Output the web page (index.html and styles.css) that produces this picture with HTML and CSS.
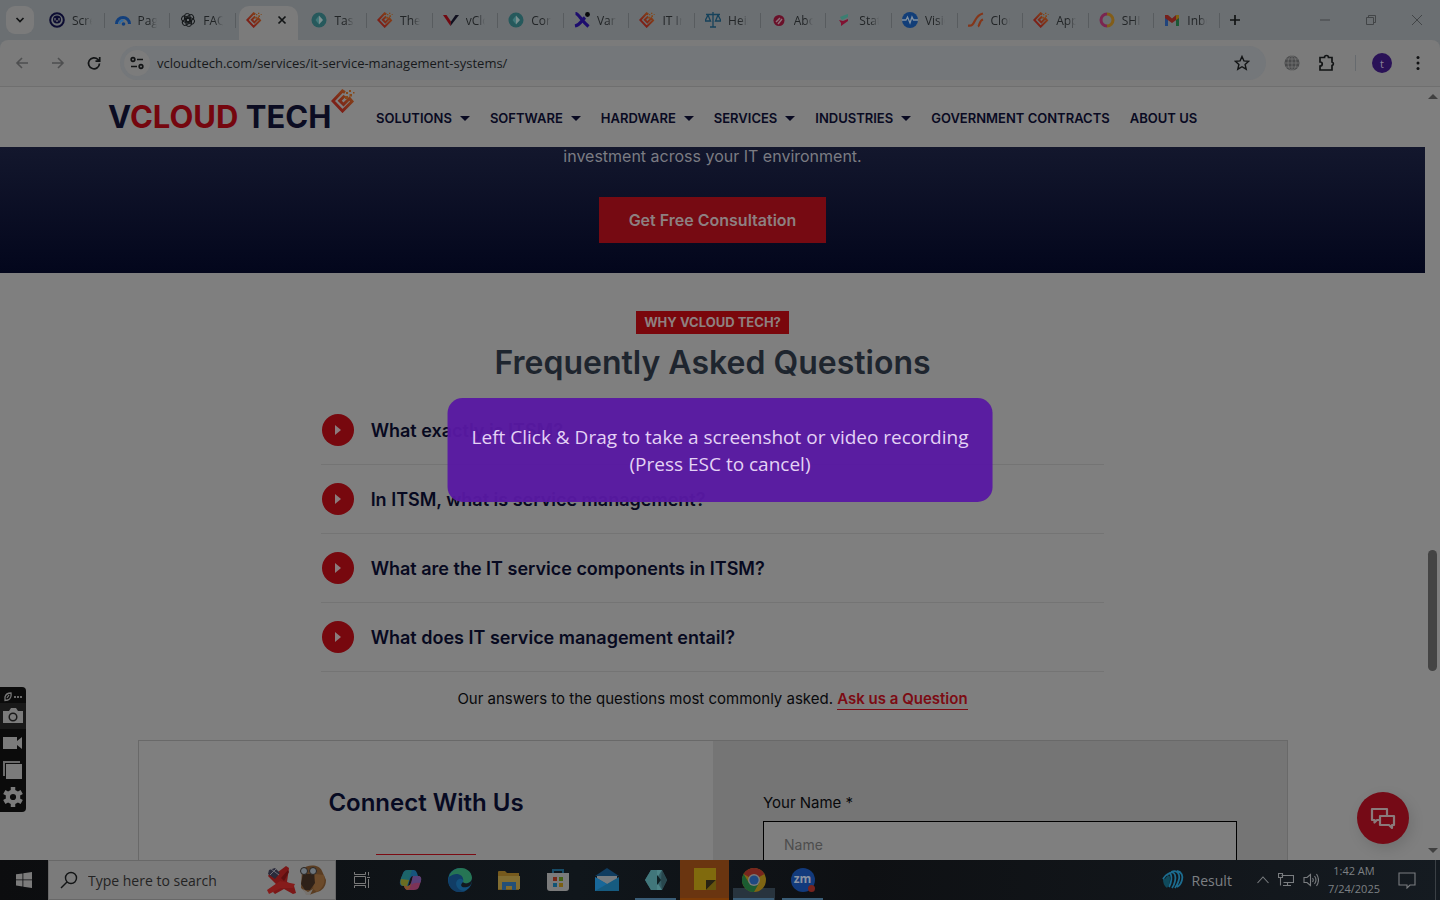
FILE: index.html
```html
<!DOCTYPE html>
<html lang="en">
<head>
<meta charset="utf-8">
<title>IT Service Management Systems - vCloud Tech</title>
<link rel="stylesheet" href="styles.css">
</head>
<body>
<svg class="defs" width="0" height="0" aria-hidden="true">
  <defs>
    <linearGradient id="ember" x1="0" y1="1" x2="1" y2="0"><stop offset="0" stop-color="#7a1416"/><stop offset="1" stop-color="#85481a"/></linearGradient>
    <symbol id="vcloud" viewBox="0 0 24 24">
      <path d="M14 3.500 11.500 2 2 12l9.500 10L21 12.500l-2.500-3-6 6-3.800-3.800 5-5" fill="none" stroke="url(#ember)" stroke-width="3"/>
      <path d="M15 3h2v2h-2zM18 1h2v2h-2zM18.500 5h2.500v2.500h-2.500zM22 3h1.500v1.500H22zM14 7h3v3h-3z" fill="#85481a"/>
    </symbol>
    <symbol id="hexa" viewBox="0 0 16 16"><circle cx="8" cy="8" r="7.500" fill="#26595c"/><path d="M8 3.500 12 8l-4 4.500z" fill="#7b8e8e"/><path d="M8 3.500 4.500 8 8 12.500z" fill="#407779"/></symbol>
  </defs>
</svg>

<div class="screen">
  <header class="browser">
    <div class="tabstrip">
      <button class="tab-search" aria-label="Search tabs"><svg width="10" height="10" viewBox="0 0 10 10"><path d="m1.500 3 3.500 3.500L8.500 3" class="ln2"/></svg></button>
      <div class="tabs" role="tablist">
        <button class="tab" role="tab"><svg viewBox="0 0 16 16"><circle cx="8" cy="8" r="6.800" fill="none" stroke="#0c0c32" stroke-width="2"/><circle cx="8" cy="7.500" r="4" fill="#0c0c32"/><path d="M6 6v2.500M8 8v2M10 6v2.500" stroke="#777" stroke-width="1.200"/></svg><span>Screen</span></button>
        <button class="tab" role="tab"><svg viewBox="0 0 16 16"><path d="M1.500 12a6.500 6.500 0 0 1 13 0" fill="none" stroke="#123f7c" stroke-width="3"/><path d="M4.500 12a3.500 3.500 0 0 1 4-3.500" fill="none" stroke="#2e6ba5" stroke-width="2"/><circle cx="8.500" cy="12" r="1.800" fill="#123f7c"/></svg><span>Page</span></button>
        <button class="tab" role="tab"><svg viewBox="0 0 16 16" fill="none" stroke="#15181a"><g id="k"><rect x="4.500" y="1.500" width="5.500" height="8.500" rx="2.700"/></g><use href="#k" transform="rotate(60 8 8)"/><use href="#k" transform="rotate(120 8 8)"/><use href="#k" transform="rotate(180 8 8)"/><use href="#k" transform="rotate(240 8 8)"/><use href="#k" transform="rotate(300 8 8)"/></svg><span>FAQ</span></button>
        <button class="tab active" role="tab" aria-selected="true" aria-label="IT Service Management Systems"><svg><use href="#vcloud"/></svg><svg class="close" viewBox="0 0 10 10"><path d="m1.500 1.500 7 7m0-7-7 7" class="ln2"/></svg></button>
        <button class="tab" role="tab"><svg><use href="#hexa"/></svg><span>Tasks</span></button>
        <button class="tab" role="tab"><svg><use href="#vcloud"/></svg><span>The</span></button>
        <button class="tab" role="tab"><svg viewBox="0 0 16 16"><path d="M0 3h3.500L8 9.500 7.500 14z" fill="#720911"/><path d="M12.500 3H16L7.500 14 8 9.500z" fill="#10101f"/></svg><span>vCloud</span></button>
        <button class="tab" role="tab"><svg><use href="#hexa"/></svg><span>Cont</span></button>
        <button class="tab" role="tab"><svg viewBox="0 0 16 16"><path d="M1.500 1.500c3 0 5 6 13 13M1 14c5-1 6-5 10-8.500" fill="none" stroke="#1d0d6e" stroke-width="3.200"/><circle cx="13.500" cy="2.500" r="2.400" fill="#07070b"/></svg><span>Vanta</span></button>
        <button class="tab" role="tab"><svg><use href="#vcloud"/></svg><span>IT In</span></button>
        <button class="tab" role="tab"><svg viewBox="0 0 16 16"><path d="M8 0v15M1 2.500h14M5 15h6M3 3 0 9h5.500L3 3m10 0-2.500 6H16l-3-6" fill="none" stroke="#16425b" stroke-width="1.300"/></svg><span>Heim</span></button>
        <button class="tab" role="tab"><svg viewBox="0 0 16 16"><circle cx="8" cy="8.500" r="5.500" fill="#6a1029"/><path d="m5 10 4-4m-2 6 4-5" stroke="#8c7079" stroke-width="1.500"/></svg><span>Abou</span></button>
        <button class="tab" role="tab"><svg viewBox="0 0 16 16"><path d="m4 5 5-2 3-1v3L6 8z" fill="#3b7f72"/><path d="m3 8 4 1 5-2v2L5 14v-3z" fill="#801131"/></svg><span>Stat</span></button>
        <button class="tab" role="tab"><svg viewBox="0 0 16 16"><circle cx="8" cy="8" r="8" fill="#123e78"/><path d="M0 8h4l1.500-3L8 11l2-6 1.500 3H16" fill="none" stroke="#8291a0" stroke-width="1.300"/></svg><span>Visio</span></button>
        <button class="tab" role="tab"><svg viewBox="0 0 16 16"><path d="M0 13.500c8 2 5-10 15-12M10 14.500c2-1 1-6 5-7" fill="none" stroke="#843619" stroke-width="2.200"/></svg><span>Clou</span></button>
        <button class="tab" role="tab"><svg><use href="#vcloud"/></svg><span>App</span></button>
        <button class="tab" role="tab"><svg viewBox="0 0 16 16" fill="none" stroke-width="3"><path d="M8 14A6 6 0 0 1 8 2" stroke="#7b2550"/><path d="M8 2a6 6 0 0 1 0 12" stroke="#825d18"/></svg><span>SHI</span></button>
        <button class="tab" role="tab"><svg viewBox="0 0 16 16"><path d="M1 3h3v11H1z" fill="#21447c"/><path d="M12 3h3v11h-3z" fill="#1b5935"/><path d="M1 3h3l4 3.500L12 3h3v3l-7 5-7-5z" fill="#76201b"/><path d="M12 3h3v3l-3 2z" fill="#7f6110"/></svg><span>Inbox</span></button>
      </div>
      <button class="newtab" aria-label="New tab"><svg width="12" height="12" viewBox="0 0 12 12"><path d="M6 1v10M1 6h10" class="ln2"/></svg></button>
      <div class="window-controls">
        <button aria-label="Minimize"><svg width="12" height="12" viewBox="0 0 12 12"><path d="M1 6h10" class="thin"/></svg></button>
        <button aria-label="Restore"><svg width="12" height="12" viewBox="0 0 12 12"><path d="M1.500 3.500h7v7h-7zM3.500 3.500v-2h7v7h-2" class="thin"/></svg></button>
        <button aria-label="Close"><svg width="12" height="12" viewBox="0 0 12 12"><path d="m1 1 10 10M11 1 1 11" class="thin"/></svg></button>
      </div>
    </div>
    <div class="toolbar">
      <div class="nav-buttons">
        <button aria-label="Back"><svg width="16" height="16" viewBox="0 0 16 16"><path d="M14 8H3m5-5L3 8l5 5" class="dim"/></svg></button>
        <button aria-label="Forward"><svg width="16" height="16" viewBox="0 0 16 16"><path d="M2 8h11M8 3l5 5-5 5" class="dim"/></svg></button>
        <button aria-label="Reload"><svg width="16" height="16" viewBox="0 0 16 16"><path d="M13.500 8.500A5.500 5.500 0 1 1 12 4.500l1.500 1.500M13.700 2v4.200H9.500" class="ln2"/></svg></button>
      </div>
      <div class="omnibox">
        <button class="site-info" aria-label="Site information"><svg width="16" height="16" viewBox="0 0 16 16"><path d="M8 4.500h6M2 11.500h6" class="ln2"/><circle cx="4" cy="4.500" r="1.800" class="ln2"/><circle cx="12" cy="11.500" r="1.800" class="ln2"/></svg></button>
        <input class="url" type="text" aria-label="Address" value="vcloudtech.com/services/it-service-management-systems/">
        <button aria-label="Bookmark"><svg width="16" height="16" viewBox="0 0 16 16"><path d="m8 1.500 1.900 4.400 4.800.4-3.600 3.200 1.100 4.700L8 11.700l-4.200 2.500 1.100-4.700L1.300 6.300l4.800-.4z" class="ln15"/></svg></button>
      </div>
      <div class="extensions">
        <button aria-label="Translate extension"><svg width="16" height="16" viewBox="0 0 16 16"><circle cx="8" cy="8" r="7.500" fill="#494a4b"/><path d="M8 0v16M1 8h14M2 4h12M2 12h12" stroke="#737373" stroke-width=".8"/><ellipse cx="8" cy="8" rx="4" ry="7.500" fill="none" stroke="#737373" stroke-width=".8"/></svg></button>
        <button aria-label="Extensions"><svg width="18" height="18" viewBox="0 0 18 18"><path d="M2 3.500h4.500a2 2 0 0 1 4 0H14v4.500a1.800 1.800 0 0 1 0 3.500V16H2v-4c3 0 3-4 0-4z" class="ln2"/></svg></button>
        <span class="divider"></span>
        <button class="avatar" aria-label="Profile">t</button>
        <button aria-label="Menu"><svg width="16" height="16" viewBox="0 0 16 16" fill="#101112"><circle cx="8" cy="2.500" r="1.500"/><circle cx="8" cy="8" r="1.500"/><circle cx="8" cy="13.500" r="1.500"/></svg></button>
      </div>
    </div>
  </header>

  <div class="viewport">
    <div class="page">
      <div class="site-header">
        <a class="logo" href="#" aria-label="vCloud Tech home"><span>V<b>CLOUD</b> TECH</span><svg width="24" height="24"><use href="#vcloud"/></svg></a>
        <nav class="menu">
          <a class="has-sub" href="#">SOLUTIONS</a>
          <a class="has-sub" href="#">SOFTWARE</a>
          <a class="has-sub" href="#">HARDWARE</a>
          <a class="has-sub" href="#">SERVICES</a>
          <a class="has-sub" href="#">INDUSTRIES</a>
          <a href="#">GOVERNMENT CONTRACTS</a>
          <a href="#">ABOUT US</a>
        </nav>
      </div>
      <section class="hero">
        <p>investment across your IT environment.</p>
        <a class="cta" href="#">Get Free Consultation</a>
      </section>
      <section class="faq">
        <span class="badge">WHY VCLOUD TECH?</span>
        <h2>Frequently Asked Questions</h2>
        <div class="questions">
          <button><i></i>What exactly is ITSM?</button>
          <button><i></i>In ITSM, what is service management?</button>
          <button><i></i>What are the IT service components in ITSM?</button>
          <button><i></i>What does IT service management entail?</button>
        </div>
        <p class="more">Our answers to the questions most commonly asked. <a href="#">Ask us a Question</a></p>
      </section>
      <section class="contact">
        <div class="connect"><h3>Connect With Us</h3><hr></div>
        <form class="form"><label for="name">Your Name *</label><input id="name" type="text" placeholder="Name"></form>
      </section>
      <button class="chat" aria-label="Chat"><svg width="26" height="26" viewBox="0 0 26 26" fill="none" stroke="#8a7a7b" stroke-width="2.200" stroke-linejoin="round"><path d="M9 15H7l-2.500 2.500V15H2V4h15v6"/><path d="M10 11h14v9h-2v3l-3-3h-9z"/></svg></button>
    </div>
    <div class="scrollbar"><span class="up"></span><span class="thumb"></span><span class="down"></span></div>
  </div>

  <footer class="taskbar">
    <button class="start" aria-label="Start"><svg width="16" height="16" viewBox="0 0 16 16" fill="#7b7b7b"><path d="M0 2.300 6.500 1.400v6.100H0zM7.300 1.300 16 0v7.500H7.300zM0 8.300h6.500v6.200L0 13.600zM7.300 8.300H16V16l-8.700-1.300z"/></svg></button>
    <label class="search"><svg width="18" height="18" viewBox="0 0 18 18"><circle cx="11" cy="7" r="5.500" class="ln15"/><path d="m7 11-6 6" class="ln15"/></svg><input type="text" aria-label="Search Windows" placeholder="Type here to search">
      <svg width="62" height="32" viewBox="0 0 62 32"><path d="m13 8 8-6 3 2-2 14 7 4 2 7-3 1-9-5-9 5-2-2 4-7-9-9 2-3z" fill="#7b1717"/><path d="m4 6 6-2 5 5-5 6-7-5z" fill="#2b2b3b"/><path d="m6 5 8 6m-9 0 6-6" stroke="#6f6f78"/><path d="m2 26 13-9 15 3-2 4-12 0-12 6z" fill="#861c1b"/><path d="m16 14 7-8 1 2-5 9z" fill="#5c0f10"/><path d="M37 6c5-6 17-6 20 1l4 9c0 7-4 11-9 12l-8 3-8-7z" fill="#5a3d22"/><path d="m50 10 9 1c2 7-1 13-7 17l-4-3z" fill="#6b4a2a"/><path d="M38 10h11l1 9-5 7h-5l-4-6z" fill="#2e2118"/><circle cx="39" cy="7" r="3.500" fill="#6d757c" stroke="#292522"/><circle cx="48" cy="7" r="3.500" fill="#6d757c" stroke="#292522"/><path d="m38 25 5 3 5-3-3 6h-4z" fill="#78736e"/></svg>
    </label>
    <div class="apps">
      <button aria-label="Task view"><svg width="16" height="16" viewBox="0 0 16 16" fill="none" stroke="#7a7a7a"><path d="M.5 0v2.500h11V0M.5 16v-2.500h11V16M.5 4.500h11v7H.5zM14.500 0v3.500M14.500 7v9M13 5.500h3"/></svg></button>
      <button aria-label="Copilot"><svg width="24" height="24" viewBox="0 0 24 24"><path d="M9 2h6q2 0 3 3l1 3h-5q-2 0-3 3l-2 7H4q-4 0-3-5l3-8q1-3 5-3z" fill="#16557d"/><path d="M2 10 5 4q1-2 4-2h4l-3 10-2 6H5q-5 0-3-8z" fill="#1c6469"/><path d="M2 11l8 1-2 6H5q-5 0-3-7z" fill="#6a6d22"/><path d="M15 22H9q-3 0-4-4h4q2 0 3-3l2-7h5q4 0 3 5l-2 6q-1 3-5 3z" fill="#7d3357"/><path d="m14 8 5 0q4 0 3 5l-1 2q-6-1-9 2z" fill="#594077"/><path d="M5 18h4q2 0 3-3l-1 5-2 2q-3 0-4-4z" fill="#81512c"/></svg></button>
      <button aria-label="Edge"><svg width="24" height="24" viewBox="0 0 24 24"><circle cx="12" cy="12" r="12" fill="#12507d"/><path d="M1 9C4-3 23-3 24 10c0 5-7 7-9 4 2-5-5-8-14-5z" fill="#267554"/><path d="M1 9c7-6 15-2 14 3-4-4-9 2-6 7 2 3 6 5 10 3C9 28-2 20 1 9z" fill="#113d66"/><path d="M15 14c2 3 9 1 9-4 1 5-2 9-5 9-5 1-8-1-4-5z" fill="#13191e"/></svg></button>
      <button aria-label="File Explorer"><svg width="24" height="24" viewBox="0 0 24 24"><path d="M1 4q0-1 1-1h6l2 2h12v17H1z" fill="#765a1d"/><path d="M1 8h22v13H1z" fill="#816d32"/><path d="M5 14h14v8h-4v-4H9v4H5z" fill="#234f78"/></svg></button>
      <button aria-label="Microsoft Store"><svg width="24" height="24" viewBox="0 0 24 24"><path d="M7 6V2h10v4" fill="none" stroke="#174b66" stroke-width="2"/><path d="M1 5h22v15q0 3-3 3H4q-3 0-3-3z" fill="#7b7b7b"/><path d="M7 9h4v4H7z" fill="#772716"/><path d="M13 9h4v4h-4z" fill="#456214"/><path d="M7 15h4v4H7z" fill="#125475"/><path d="M13 15h4v4h-4z" fill="#7b5e12"/></svg></button>
      <button aria-label="Mail"><svg width="24" height="24" viewBox="0 0 24 24"><path d="M0 8 12 0l12 8z" fill="#103d60"/><path d="M2 8h20v8H2z" fill="#767c80"/><path d="M0 9 12 16 24 9v14H0z" fill="#165b80"/><path d="M0 9 12 16 0 23z" fill="#18689a"/></svg></button>
      <button class="open" aria-label="Screen recorder"><svg width="24" height="24" viewBox="0 0 24 24"><path d="M7 2h11l5 10-5 10H7L1 12z" fill="#345d64"/><path d="M1 12 7 2h6v20H7z" fill="#41777b"/><path d="M13 2h5l-5 8zM13 22h5l-5-8z" fill="#4d8588"/><path d="m13 7 4 5-4 5z" fill="#0f1f22"/><path d="m17 12 1-10 5 10-5 10z" fill="#29484e"/></svg></button>
      <button class="sticky" aria-label="Sticky Notes"><svg width="24" height="24" viewBox="0 0 24 24"><path d="M1 1h22v12L13 23H1z" fill="#806a0d"/><path d="M13 13h10L13 23z" fill="#272313"/><path d="M13 23 23 13v10z" fill="#66540d"/></svg></button>
      <button class="open current" aria-label="Chrome"><svg width="24" height="24" viewBox="0 0 24 24"><circle cx="12" cy="12" r="12" fill="#7e6513"/><path d="M12 12 1.600 6A12 12 0 0 1 22.400 6z" fill="#77251e"/><path d="M1.600 6A12 12 0 0 0 12 24l5-9H7z" fill="#1b5c31"/><circle cx="12" cy="12" r="6" fill="#7a7a7a"/><circle cx="12" cy="12" r="4.600" fill="#1f4982"/></svg></button>
      <button class="open zoom" aria-label="Zoom"><span>zm</span></button>
    </div>
    <div class="tray">
      <button class="news"><svg width="22" height="22" viewBox="0 0 22 22"><path d="M3 10c4-5 5-4 5 0s-1 6-3 9c-3-2-4-5-4-9z" fill="#0f4a5c"/><path d="M1 10C4 5 8 3 9 6s0 8-2 12M5 6c4-4 7-3 8 0s0 9-3 13M9 3c5-2 7 0 8 3s-1 9-4 13M15 2c5 1 6 5 5 9s-3 6-5 7" fill="none" stroke="#1c6c8f" stroke-width="1.800"/></svg>Result</button>
      <button aria-label="Hidden icons"><svg width="12" height="12" viewBox="0 0 12 12"><path d="m.5 9 5.500-6 5.500 6" class="tray-ln"/></svg></button>
      <button aria-label="Network"><svg width="16" height="16" viewBox="0 0 16 16"><path d="M3.500 3.500h12v7h-10M9.500 10.500v3M5 13.500h8M.5 1.500h4v4h-4zM2.500 5.500v8" class="tray-ln"/></svg></button>
      <button aria-label="Volume"><svg width="16" height="16" viewBox="0 0 16 16"><path d="M1 5.500h3l3.500-3v11l-3.500-3H1zM9.500 6q1.500 2 0 4M11.500 4q3 4 0 8M13.500 2q4 6 0 12" class="tray-ln"/></svg></button>
      <div class="clock"><span>1:42 AM</span><span>7/24/2025</span></div>
      <button class="notes" aria-label="Notifications"><svg width="18" height="18" viewBox="0 0 18 18"><path d="M1 2h16v12h-5l-3 3v-3H1z" class="tray-ln"/></svg></button>
      <span class="peek"></span>
    </div>
  </footer>

  <aside class="recorder">
    <div class="grip"><svg width="20" height="10" viewBox="0 0 20 10"><path d="M2 8.500 2 5q1-4 6-4 1 5-3 7zM4 6l2-3" fill="none" stroke="#777" stroke-width="1.300"/><path d="M11 5h2m1 0h2m1 0h2" stroke="#888" stroke-width="1.500"/></svg></div>
    <button class="selected" aria-label="Photo"><svg width="20" height="18" viewBox="0 0 20 18"><path d="M0 4h6l2-3h5l2 3h5v12H0z" fill="#7b7b7b"/><circle cx="10" cy="10" r="3.800" fill="none" stroke="#191919" stroke-width="1.500"/></svg></button>
    <button aria-label="Video"><svg width="20" height="18" viewBox="0 0 20 18"><path d="M0 3h14v4l5-4v12l-5-4v4H0z" fill="#7b7b7b"/></svg></button>
    <button aria-label="Gallery"><svg width="20" height="18" viewBox="0 0 20 18"><path d="M0 0h17v2H2v13H0z" fill="#6a6a6a"/><path d="M3 3h16v15H3z" fill="#7b7b7b"/></svg></button>
    <button aria-label="Settings"><svg width="20" height="20" viewBox="0 0 20 20"><circle cx="10" cy="10" r="5.200" fill="none" stroke="#7b7b7b" stroke-width="4.200"/><path d="M10 0v4M10 16v4M1.300 5l3.500 2M15.200 13l3.500 2M1.300 15l3.500-2M15.200 7l3.500-2" stroke="#7b7b7b" stroke-width="4.500"/></svg></button>
  </aside>
  <div class="hint" role="status">Left Click &amp; Drag to take a screenshot or video recording<br>(Press ESC to cancel)</div>
</div>
</body>
</html>
```
FILE: styles.css
```css
* { box-sizing: border-box; }
body { margin: 0; background: #7f7f7f; font-family: Inter, "Liberation Sans", sans-serif; color: #08090c; }
button { font: inherit; color: inherit; background: none; border: 0; padding: 0; display: flex; align-items: center; justify-content: center; }
input { font: inherit; color: inherit; background: none; border: 0; padding: 0; min-width: 0; outline: 0; }
a { color: inherit; text-decoration: none; }
h2, h3, p { margin: 0; }
svg { flex: none; display: block; }
.defs { position: absolute; }
.ln2 { fill: none; stroke: #121415; stroke-width: 1.7; }
.ln15 { fill: none; stroke: #121415; stroke-width: 1.4; }
.thin { fill: none; stroke: #424547; stroke-width: 1; }
.dim { fill: none; stroke: #4e4f50; stroke-width: 1.6; }
.tray-ln { fill: none; stroke: #7a7d80; stroke-width: 1.1; }

.screen { position: relative; display: flex; flex-direction: column; height: 100vh; overflow: hidden; }
.browser, .taskbar, .recorder, .hint { font-family: "Open Sans", "Noto Sans", sans-serif; }

/* Browser chrome */
.browser { background: #6b6f72; }
.tabstrip { display: flex; align-items: center; height: 40px; padding-left: 6px; }
.tab-search { width: 28px; height: 28px; border-radius: 9px; background: #7b7b7b; margin-right: 5px; }
.tabs { display: flex; flex: 1; align-self: stretch; min-width: 0; }
.tab { position: relative; flex: 1; min-width: 0; justify-content: flex-start; gap: 7px; padding: 0 13px 0 10px; font-size: 12px; color: #222527; }
.tab > svg { width: 16px; height: 16px; }
.tab span { flex: 1; min-width: 0; overflow: hidden; white-space: nowrap; text-align: left; -webkit-mask-image: linear-gradient(90deg, #000 60%, transparent); mask-image: linear-gradient(90deg, #000 60%, transparent); }
.tab:not(.active)::after { content: ""; position: absolute; right: 0; top: 13px; width: 1px; height: 15px; background: #585c5f; }
.tab.active { z-index: 1; gap: 15px; }
.tab.active::before { content: ""; position: absolute; z-index: -1; inset: 6px 3px 0; background: #7b7b7b; border-radius: 10px 10px 0 0; }
.tab .close { width: 10px; height: 10px; }
.newtab { width: 30px; height: 30px; }
.window-controls { display: flex; align-self: stretch; margin-left: 52px; }
.window-controls button { width: 46px; }
.toolbar { display: flex; align-items: center; height: 47px; padding: 0 14px; background: #7b7b7b; border-bottom: 1px solid #6f6f6f; border-radius: 8px 8px 0 0; }
.nav-buttons { display: flex; gap: 20px; margin-right: 18px; }
.omnibox { display: flex; align-items: center; flex: 1; height: 34px; padding: 0 16px 0 4px; border-radius: 17px; background: #74777a; }
.site-info { width: 26px; height: 26px; border-radius: 50%; background: #7c7c7c; margin-right: 7px; }
.url { flex: 1; font-size: 13px; color: #17191b; }
.extensions { display: flex; align-items: center; gap: 18px; padding-left: 18px; }
.divider { width: 1px; height: 16px; background: #666a6e; margin: 0 -2px 0 1px; }
.avatar { width: 20px; height: 20px; border-radius: 50%; background: #2a1257; color: #8b8297; font-size: 11px; }

/* Web page */
.viewport { display: flex; flex: 1; min-height: 0; }
.page { position: relative; flex: 1; min-width: 0; overflow: hidden; }
.site-header { display: flex; align-items: center; height: 60px; padding-left: 108px; gap: 21px; background: #7f7f7f; }
.logo { display: flex; align-items: flex-start; width: 247px; color: #0b0c22; font-size: 31px; font-weight: 700; line-height: 36px; white-space: nowrap; }
.logo b { font-weight: 700; color: #75060e; }
.logo svg { margin-top: -10px; margin-left: auto; }
.menu { display: flex; gap: 20px; font-size: 13px; font-weight: 600; color: #090a22; white-space: nowrap; padding-top: 2px; }
.has-sub { display: flex; align-items: center; gap: 8px; }
.has-sub::after { content: ""; border: 5px solid transparent; border-top-color: currentColor; border-bottom: 0; }
.hero { display: flex; flex-direction: column; align-items: center; height: 126px; background: linear-gradient(#13172d, #03061c); color: #7b7c83; }
.hero p { font-size: 16px; line-height: 18px; margin-bottom: 32px; }
.cta { padding: 0 30px; line-height: 46px; font-size: 16px; font-weight: 600; background: #760a12; color: #8d8081; }
.faq { display: flex; flex-direction: column; align-items: center; padding-top: 38px; }
.badge { padding: 0 8px; line-height: 23px; font-size: 13px; font-weight: 700; background: #7a070c; color: #8e8080; }
.faq h2 { font-size: 32px; font-weight: 600; line-height: 40px; margin: 9px 0 13px; color: #1e252e; }
.questions { width: 55%; }
.questions button { width: 100%; height: 69px; padding-left: 1px; justify-content: flex-start; gap: 17px; border-bottom: 1px solid #747474; font-size: 18px; font-weight: 600; color: #070920; }
.questions i { display: flex; align-items: center; justify-content: center; width: 32px; height: 32px; border-radius: 50%; background: #77080e; }
.questions i::before { content: ""; border: 5px solid transparent; border-left: 6px solid #8b7c7d; border-right: 0; }
.more { margin-top: 17px; font-size: 15px; line-height: 20px; }
.more a { display: inline-block; font-weight: 600; color: #7c0b13; border-bottom: 1px solid #7c0b13; }
.contact { display: grid; grid-template-columns: 1fr 1fr; margin: 30px 137px 0 138px; border: 1px solid #696969; }
.connect { display: flex; flex-direction: column; align-items: center; padding-top: 46px; }
.connect h3 { font-size: 24px; font-weight: 600; line-height: 32px; color: #070a22; }
.connect hr { width: 100px; margin: 35px 0; border: 0; border-top: 1px solid #7c0b13; }
.form { display: flex; flex-direction: column; padding: 52px 50px; background: #757575; }
.form label { font-size: 15px; line-height: 20px; margin-bottom: 8px; }
.form input { height: 46px; padding: 0 20px; border: 1px solid #000; background: #7f7f7f; font-size: 14px; }
.form input::placeholder { color: #4d4d4d; }
.chat { position: absolute; right: 16px; bottom: 16px; width: 52px; height: 52px; border-radius: 50%; background: #750a16; box-shadow: 3px 5px 14px #0000001f; }
.scrollbar { display: flex; flex-direction: column; align-items: center; width: 15px; padding: 7px 0; }
.up, .down { border: 5px solid transparent; }
.up { border-top: 0; border-bottom-color: #404040; }
.down { border-bottom: 0; border-top-color: #404040; margin-top: auto; }
.thumb { width: 9px; height: 16%; margin-top: 451px; border-radius: 5px; background: #444; }

/* Desktop */
.taskbar { display: flex; flex: none; height: 40px; background: linear-gradient(90deg, #0c0d0f, #10161b 40%, #0e1013 60%, #151b21); color: #7d8083; }
.start { width: 48px; }
.search { display: flex; align-items: center; width: 288px; padding: 0 8px 0 11px; gap: 10px; background: #7b7b7b; border: 1px solid #686868; color: #1b1b1b; }
.search input { flex: 1; font-size: 14px; }
.search input::placeholder { color: #232323; }
.apps { display: flex; padding-left: 1px; }
.apps button { position: relative; width: 49px; }
.apps .open::after { content: ""; position: absolute; inset: auto 4px 0; height: 2px; background: #3a5d77; }
.apps .sticky { background: #6a3510; border-bottom: 2px solid #7c3b06; }
.apps .current { background: linear-gradient(transparent 70%, #28343e 70%) center / 42px 100% no-repeat; }
.zoom span { width: 24px; height: 24px; border-radius: 50%; background: #123a7c; color: #8a93a3; font-size: 12px; font-weight: 700; line-height: 22px; }
.zoom::before { content: ""; position: absolute; right: 12px; bottom: 8px; width: 7px; height: 7px; border-radius: 50%; background: #78231d; }
.tray { display: flex; align-items: center; gap: 9px; margin-left: auto; padding-right: 4px; font-size: 14px; }
.news { gap: 8px; margin-right: 16px; }
.clock { display: flex; flex-direction: column; align-items: center; font-size: 11px; line-height: 18px; }
.notes { margin: 0 10px 0 9px; }
.peek { width: 1px; height: 40px; background: #3b4045; }

.recorder { position: absolute; left: 0; top: 687px; width: 26px; padding: 3px 0 2px; border-radius: 0 4px 4px 0; background: #0b0b0b; }
.grip { display: flex; justify-content: center; height: 13px; align-items: center; }
.recorder button { width: 26px; height: 27px; }
.recorder .selected { height: 26px; background: #191919; }
.hint { position: absolute; left: 50%; top: 50%; transform: translate(-50%, -50%); padding: 26px 24px 24px; border-radius: 15px; background: #5819a2f5; color: #e4d2f5; font-size: 19px; line-height: 27px; text-align: center; white-space: nowrap; }
```
